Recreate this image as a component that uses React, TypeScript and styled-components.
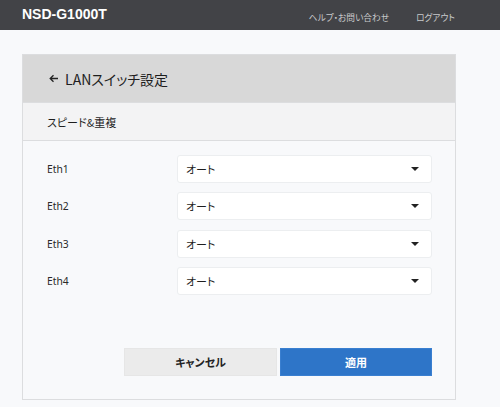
import React from 'react';
import styled, { createGlobalStyle } from 'styled-components';

const GlobalStyle = createGlobalStyle`
  html, body {
    margin: 0;
    padding: 0;
    background: #f8f9fb;
  }
  body {
    font-family: "Noto Sans CJK JP", "Noto Sans", sans-serif;
    color: #222;
    font-feature-settings: "palt";
  }
`;

const Header = styled.header`
  height: 30px;
  background: #424347;
  display: flex;
  align-items: center;
  padding: 0 45px 0 22px;
`;

const Brand = styled.div`
  color: #fff;
  font-family: "Liberation Sans", Arial, sans-serif;
  font-weight: bold;
  font-size: 14px;
  flex: 1;
  margin-top: -2px;
`;

const Nav = styled.nav`
  display: flex;
  gap: 27px;
  margin-top: 5px;
`;

const NavLink = styled.a`
  color: #c9cacc;
  font-size: 8.7px;
  text-decoration: none;
`;

const Main = styled.main`
  padding: 24px 44px 24px 22px;
`;

const Card = styled.section`
  border: 1px solid #dcdddf;
  width: 432px;
`;

const CardHeader = styled.div`
  height: 47px;
  background: #d8d8d8;
  border-bottom: 1px solid #dcdddf;
  display: flex;
  align-items: center;
  gap: 6px;
  padding-left: 26px;
  font-size: 14px;
  color: #1e1e1e;
`;

const SubHeader = styled.div`
  height: 37px;
  background: #f3f3f4;
  border-bottom: 1px solid #dcdddf;
  display: flex;
  align-items: center;
  padding-left: 24px;
  font-size: 11px;
  color: #1e1e1e;
`;

const Body = styled.div`
  padding: 14px 23px 23px 24px;
`;

const Rows = styled.div`
  display: flex;
  flex-direction: column;
  gap: 9.33px;
`;

const Row = styled.div`
  display: grid;
  grid-template-columns: 130px 1fr;
  align-items: center;
`;

const Label = styled.span`
  font-family: "Noto Sans", sans-serif;
  font-size: 10.3px;
  color: #2a2a2a;
`;

const Select = styled.div`
  height: 26px;
  background: #fff;
  border: 1px solid #eceef0;
  border-radius: 3px;
  display: flex;
  align-items: center;
  justify-content: space-between;
  padding: 0 12px 0 8px;
  font-size: 11px;
  color: #1e1e1e;
`;

const Caret = styled.span`
  width: 0;
  height: 0;
  border-left: 4px solid transparent;
  border-right: 4px solid transparent;
  border-top: 4px solid #222;
`;

const Actions = styled.div`
  display: grid;
  grid-template-columns: 153px 152px;
  gap: 3px;
  justify-content: end;
  margin-top: 53px;
`;

const Button = styled.button<{ $primary?: boolean }>`
  height: 28px;
  border: 1px solid ${(p) => (p.$primary ? '#3a7fd0' : '#e6e6e6')};
  background: ${(p) => (p.$primary ? '#2e75c8' : '#ebebeb')};
  color: ${(p) => (p.$primary ? '#fff' : '#222')};
  font-family: inherit;
  font-feature-settings: "palt";
  font-weight: bold;
  font-size: 11px;
  padding: 0;
`;

const BackArrow = () => (
  <svg width="10" height="9" viewBox="0 0 10 9" fill="none">
    <path d="M9 4.5H1.5M4.5 1.2L1.2 4.5l3.3 3.3" stroke="#222" strokeWidth="1.3" />
  </svg>
);

const ports = ['Eth1', 'Eth2', 'Eth3', 'Eth4'];

export default function App() {
  return (
    <>
      <GlobalStyle />
      <Header>
        <Brand>NSD-G1000T</Brand>
        <Nav>
          <NavLink>ヘルプ・お問い合わせ</NavLink>
          <NavLink>ログアウト</NavLink>
        </Nav>
      </Header>
      <Main>
        <Card>
          <CardHeader>
            <BackArrow />
            LANスイッチ設定
          </CardHeader>
          <SubHeader>スピード&amp;重複</SubHeader>
          <Body>
            <Rows>
              {ports.map((p) => (
                <Row key={p}>
                  <Label>{p}</Label>
                  <Select>
                    オート
                    <Caret />
                  </Select>
                </Row>
              ))}
            </Rows>
            <Actions>
              <Button>キャンセル</Button>
              <Button $primary>適用</Button>
            </Actions>
          </Body>
        </Card>
      </Main>
    </>
  );
}
